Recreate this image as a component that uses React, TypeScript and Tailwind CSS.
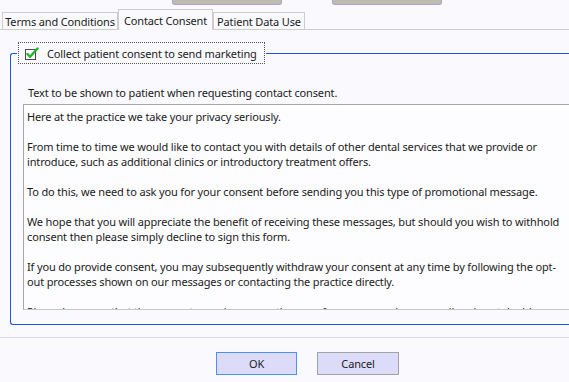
import React from "react";

const TABS = [
  { label: "Terms and Conditions", w: "w-[116px]", active: false },
  { label: "Contact Consent", w: "w-[95px]", active: true },
  { label: "Patient Data Use", w: "w-[92px]", active: false },
];

const CONSENT_LINES = [
  "Here at the practice we take your privacy seriously.",
  "",
  "From time to time we would like to contact you with details of other dental services that we provide or",
  "introduce, such as additional clinics or introductory treatment offers.",
  "",
  "To do this, we need to ask you for your consent before sending you this type of promotional message.",
  "",
  "We hope that you will appreciate the benefit of receiving these messages, but should you wish to withhold",
  "consent then please simply decline to sign this form.",
  "",
  "If you do provide consent, you may subsequently withdraw your consent at any time by following the opt-",
  "out processes shown on our messages or contacting the practice directly.",
  "",
  "Please be aware that the consent you give covers the use of your name, phone, email and postal address.",
];

function CheckIcon() {
  return (
    <svg width={15} height={13} viewBox="0 0 15 13">
      <rect x={0.5} y={2.5} width={10} height={10} fill="#fff" stroke="#4a4a4a" />
      <path d="M2.5 7 L5 9.8 L12.5 1.5" fill="none" stroke="#19b82a" strokeWidth={2.4} strokeLinecap="round" strokeLinejoin="round" />
    </svg>
  );
}

export default function App() {
  return (
    <div className="relative h-[382px] w-[569px] overflow-hidden bg-[#fafafe] text-[11px] tracking-[-0.15px] text-[#1b1b1b] [font-family:'Noto_Sans','Open_Sans',sans-serif]">
      {/* buttons of the form above, cut off */}
      <div className="flex h-[5px] gap-[50px] pl-[172px]">
        <div className="h-[5px] w-[110px] rounded-b-[3px] border border-t-0 border-[#a9a7cc] bg-[#bdbbb2]" />
        <div className="h-[5px] w-[110px] rounded-b-[3px] border border-t-0 border-[#a9a7cc] bg-[#bdbbb2]" />
      </div>

      {/* tab strip */}
      <div className="mt-[5px] flex h-[20px] items-end border-b border-[#cdcdcd] pl-[2px]">
        {TABS.map(t => (
          <div
            key={t.label}
            className={
              t.active
                ? `${t.w} -mb-px flex h-[21px] items-center justify-center whitespace-nowrap border border-b-0 border-[#cdcdcd] bg-[#fafafe] leading-none`
                : `${t.w} flex h-[17px] items-center justify-center whitespace-nowrap border border-b-0 border-[#cdcdcd] bg-[#fafafe] leading-none`
            }
          >
            {t.label}
          </div>
        ))}
      </div>

      {/* group box */}
      <fieldset className="ml-[10px] mt-[12px] h-[283px] rounded-l-[3px] border border-r-0 border-[#1c55e6] pl-[6px]">
        <legend className="px-[1px]">
          <div className="flex h-[22px] w-[247px] items-center gap-[7px] whitespace-nowrap border border-dotted border-[#555] pl-[6px]">
            <CheckIcon />
            <span className="leading-none">Collect patient consent to send marketing</span>
          </div>
        </legend>
        <div className="mt-[23px] whitespace-nowrap pl-[11px] leading-none">Text to be shown to patient when requesting contact consent.</div>
        <div className="ml-[6px] mt-[6px] h-[206px] overflow-hidden border border-r-0 border-[#a8a8a8] border-b-[#c6c6c6] bg-[#fdfdff] pl-[3px] pt-[4px] leading-[15px]">
          {CONSENT_LINES.map((line, i) => (
            <div key={i} className="h-[15px] whitespace-nowrap">{line}</div>
          ))}
        </div>
      </fieldset>

      {/* footer */}
      <div className="mt-[12px] border-t border-[#dcdcef]" />
      <div className="mt-[14px] flex gap-[20px] pl-[216px]">
        <button type="button" className="h-[23px] w-[81px] border border-[#4a92f2] bg-[#dcdcfa] leading-none">OK</button>
        <button type="button" className="h-[23px] w-[82px] border border-[#a3a3a3] bg-[#dcdcfa] leading-none">Cancel</button>
      </div>
    </div>
  );
}
